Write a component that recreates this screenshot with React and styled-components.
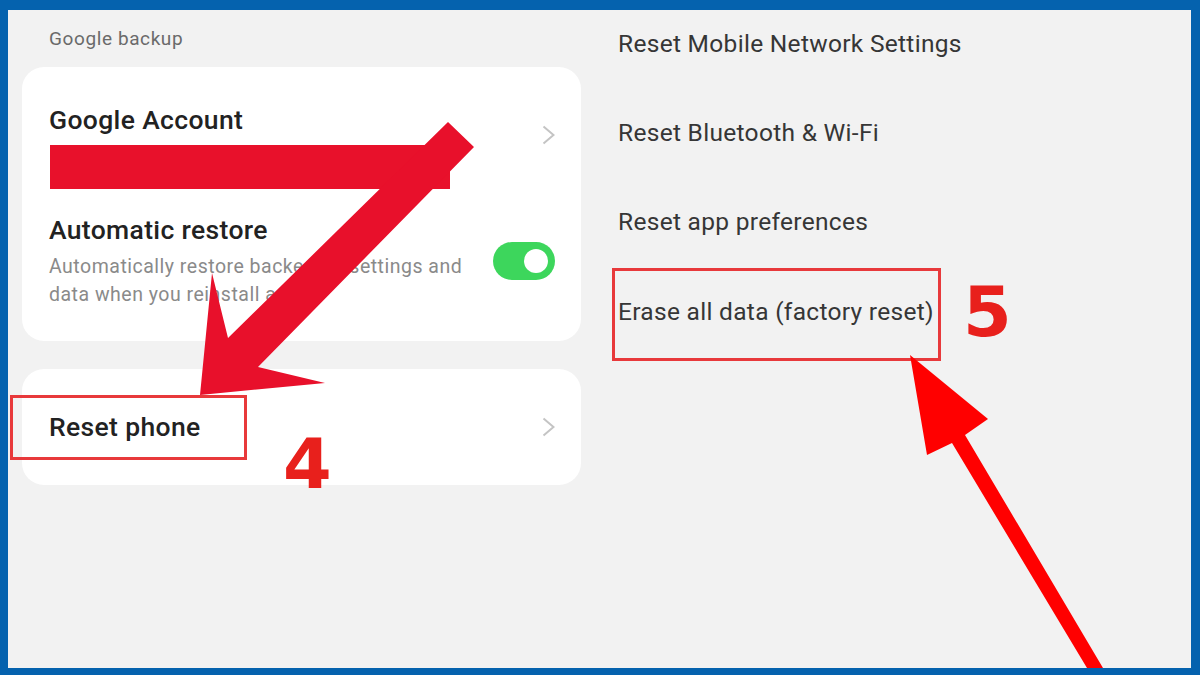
import React from 'react';
import styled, { createGlobalStyle } from 'styled-components';

const GlobalStyle = createGlobalStyle`
  html, body {
    margin: 0;
    padding: 0;
    background: #0562ae;
  }
  * {
    box-sizing: border-box;
  }
`;

const Frame = styled.div`
  position: relative;
  width: 1200px;
  height: 675px;
  padding: 10px 9px 7px 8px;
  background: #0562ae;
  font-family: Roboto, 'Noto Sans', sans-serif;
  overflow: hidden;
`;

const Screen = styled.div`
  display: flex;
  gap: 37px;
  height: 100%;
  padding-left: 14px;
  background: #f2f2f2;
`;

const LeftColumn = styled.div`
  display: flex;
  flex-direction: column;
  width: 559px;
  padding-top: 17px;
`;

const SectionLabel = styled.div`
  padding-left: 27px;
  margin-bottom: 16px;
  font-size: 19px;
  letter-spacing: 0.6px;
  line-height: 24px;
  color: #6a6a6a;
`;

const Card = styled.div`
  position: relative;
  display: flex;
  flex-direction: column;
  padding: ${(p) => p.$padding};
  margin-bottom: 28px;
  background: #fff;
  border-radius: 22px;
`;

const Row = styled.div`
  display: flex;
  align-items: ${(p) => p.$align || 'center'};
  justify-content: space-between;
  gap: 24px;
  margin-top: ${(p) => p.$top || 0}px;
`;

const RowText = styled.div`
  display: flex;
  flex-direction: column;
`;

const Title = styled.div`
  font-size: 26.5px;
  font-weight: 500;
  letter-spacing: 0.35px;
  line-height: 34px;
  color: #222;
`;

const Subtitle = styled.div`
  margin-top: 6px;
  font-size: 19.5px;
  letter-spacing: 0.5px;
  line-height: 28px;
  color: #8a8a8a;
  white-space: nowrap;
`;

const Redaction = styled.div`
  width: 400px;
  height: 44px;
  margin-top: 8px;
  margin-left: 1px;
  background: #e8112b;
`;

const Chevron = styled.svg`
  flex: none;
  width: 13px;
  height: 20px;
  margin-top: ${(p) => p.$top || 0}px;
`;

const Toggle = styled.div`
  position: relative;
  flex: none;
  width: 62px;
  height: 38px;
  border-radius: 19px;
  background: #3dd65c;

  &::after {
    content: '';
    position: absolute;
    top: 7px;
    right: 7px;
    width: 24px;
    height: 24px;
    border-radius: 50%;
    background: #fff;
  }
`;

const RightColumn = styled.div`
  display: flex;
  flex-direction: column;
  gap: 57px;
  padding-top: 18px;
`;

const ListItem = styled.div`
  position: relative;
  font-size: 24.5px;
  letter-spacing: 0.3px;
  line-height: 32px;
  color: #363636;
  margin-top: ${(p) => p.$top || 0}px;
`;

const Highlight = styled.div`
  position: absolute;
  top: ${(p) => p.$top}px;
  left: ${(p) => p.$left}px;
  width: ${(p) => p.$width}px;
  height: ${(p) => p.$height}px;
  border: 3px solid #e8393b;
  pointer-events: none;
`;

const Overlay = styled.svg`
  position: absolute;
  top: 0;
  left: 0;
  width: 1200px;
  height: 675px;
  pointer-events: none;
`;

const StepNumber = styled.div`
  position: absolute;
  top: ${(p) => p.$top}px;
  left: ${(p) => p.$left}px;
  font-family: 'DejaVu Sans', 'Open Sans', sans-serif;
  font-size: 70px;
  font-weight: 700;
  line-height: 70px;
  color: #e8201c;
`;

const BorderCap = styled.div`
  position: absolute;
  left: 0;
  right: 0;
  bottom: 0;
  height: 7px;
  background: #0562ae;
`;

function ChevronIcon({ top }) {
  return (
    <Chevron $top={top} viewBox="0 0 13 20">
      <polyline points="1.5,1.5 11.5,10 1.5,18.5" fill="none" stroke="#c4c4c4" strokeWidth="2" />
    </Chevron>
  );
}

export default function App() {
  return (
    <Frame>
      <GlobalStyle />
      <Screen>
        <LeftColumn>
          <SectionLabel>Google backup</SectionLabel>
          <Card $padding="36px 26px 32px 27px">
            <Row $align="flex-start">
              <RowText>
                <Title>Google Account</Title>
                <Redaction />
              </RowText>
              <ChevronIcon top={22} />
            </Row>
            <Row $top={24}>
              <RowText>
                <Title>Automatic restore</Title>
                <Subtitle>
                  Automatically restore backed-up settings and
                  <br />
                  data when you reinstall apps
                </Subtitle>
              </RowText>
              <Toggle />
            </Row>
          </Card>
          <Card $padding="41px 26px 41px 27px">
            <Row>
              <Title>Reset phone</Title>
              <ChevronIcon />
            </Row>
            <Highlight $top={26} $left={-12} $width={237} $height={65} />
          </Card>
        </LeftColumn>
        <RightColumn>
          <ListItem>Reset Mobile Network Settings</ListItem>
          <ListItem>Reset Bluetooth &amp; Wi-Fi</ListItem>
          <ListItem>Reset app preferences</ListItem>
          <ListItem $top={1}>
            Erase all data (factory reset)
            <Highlight $top={-28} $left={-6} $width={329} $height={93} />
          </ListItem>
        </RightColumn>
      </Screen>

      <Overlay viewBox="0 0 1200 675">
        <polygon
          points="448,122 474,147 258,367 325,383 200,395 212,273 228,338"
          fill="#e8102b"
        />
        <polygon
          points="910,355 988,419 965,435 1103,668 1087,668 952,443 927,455"
          fill="#ff0000"
        />
      </Overlay>
      <BorderCap />
      <StepNumber $top={429} $left={283}>4</StepNumber>
      <StepNumber $top={277} $left={963}>5</StepNumber>
    </Frame>
  );
}
